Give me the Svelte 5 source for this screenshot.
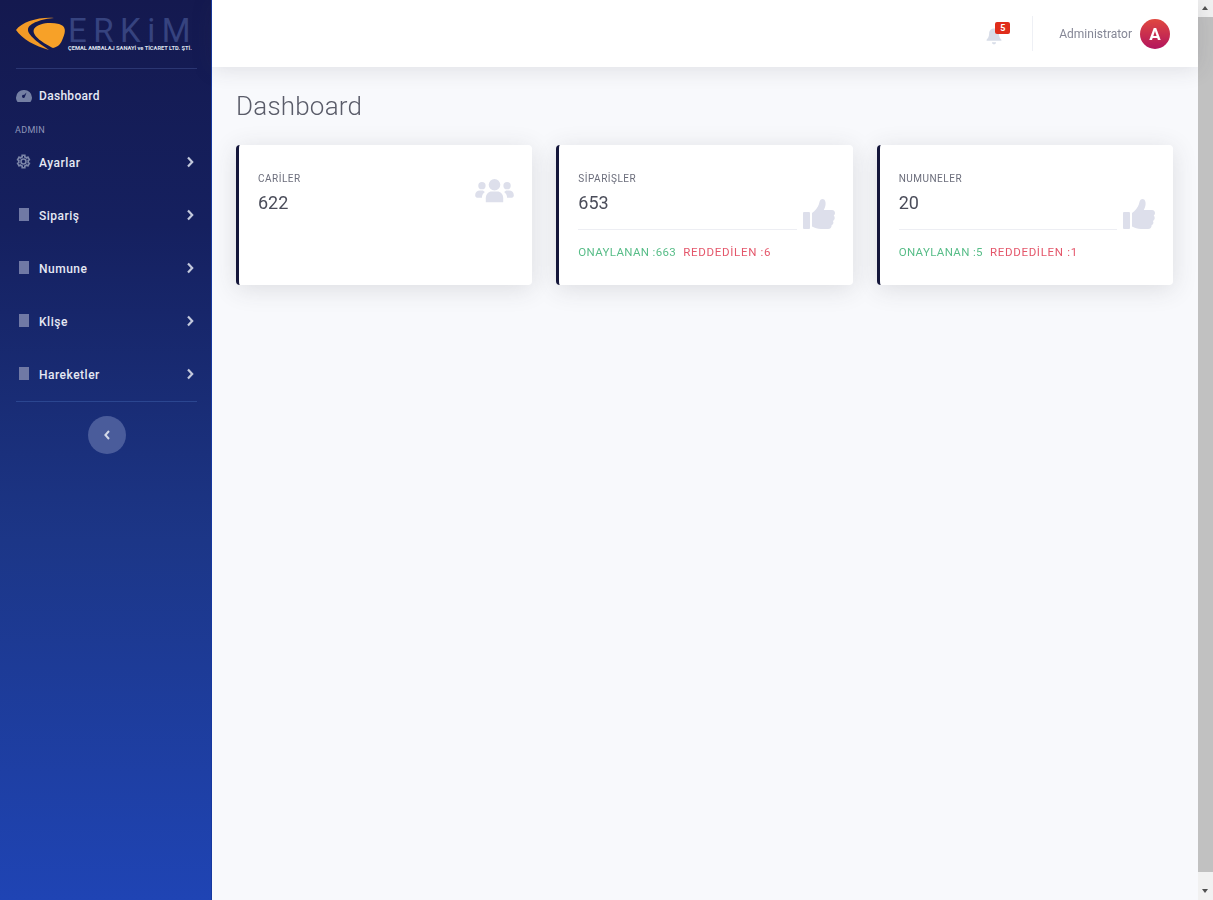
<script>
	const menu = ['Sipariş', 'Numune', 'Klişe', 'Hareketler'];

	const cards = [
		{ title: 'SİPARİŞLER', value: '653', ok: 'ONAYLANAN :663', no: 'REDDEDİLEN :6' },
		{ title: 'NUMUNELER', value: '20', ok: 'ONAYLANAN :5', no: 'REDDEDİLEN :1' }
	];
</script>

<div class="page">
	<aside class="sidebar">
		<div class="brand">
			<svg class="logo-mark" viewBox="0 0 50 34" width="50" height="34">
				<path d="M0 13 C6 5 22 0 38 1 C26 2 13 6 12 12 C11 18 24 27 33 33 C19 29 6 22 0 13Z" fill="#f39a26" />
				<path d="M18 12 C22 6 34 5 43 7 C50 9 50 14 47 21 C45 27 42 30 37 31 C29 27 15 19 18 12Z" fill="#f7a128" />
			</svg>
			<div class="brand-text">
				<span class="brand-name">ERKiM</span>
				<span class="brand-sub">ÇEMAL AMBALAJ SANAYİ ve TİCARET LTD. ŞTİ.</span>
			</div>
		</div>
		<hr class="rule" />
		<a class="dash">
			<svg class="icon" viewBox="0 0 16 14" width="16" height="14">
				<path d="M8 1a7.600 7.600 0 0 0-8 7.400c0 1.700.6 3.200 1.600 4.600h12.800c1-1.400 1.600-2.900 1.600-4.600A7.600 7.600 0 0 0 8 1zm0 5 2.500-2.500-1.500 4a1.500 1.500 0 1 1-1-1.500z" fill="#747fa3" fill-rule="evenodd" />
			</svg>
			<span>Dashboard</span>
		</a>
		<div class="heading">ADMIN</div>
		<a class="item">
			<svg class="icon" viewBox="0 0 24 24" width="15" height="15">
				<path d="M12 8a4 4 0 1 0 0 8 4 4 0 0 0 0-8zm9.400 6.900-2-1.200a7.600 7.600 0 0 0 0-3.400l2-1.200-2.300-4-2.100 1.200a7.600 7.600 0 0 0-2.900-1.700V2H9.900v2.600a7.600 7.600 0 0 0-2.900 1.700L4.900 5.100l-2.300 4 2 1.200a7.600 7.600 0 0 0 0 3.400l-2 1.200 2.300 4 2.100-1.200a7.600 7.600 0 0 0 2.900 1.700V22h4.200v-2.600a7.600 7.600 0 0 0 2.900-1.700l2.100 1.200z" fill="none" stroke="#7c86a8" stroke-width="2.600" />
			</svg>
			<span class="label">Ayarlar</span>
			<svg class="chevron" viewBox="0 0 8 12" width="8" height="12">
				<path d="M2 1.500 6.200 6 2 10.500" fill="none" stroke="#c3c9dc" stroke-width="2.200" />
			</svg>
		</a>
		{#each menu as label}
			<a class="item">
				<span class="doc"></span>
				<span class="label">{label}</span>
				<svg class="chevron" viewBox="0 0 8 12" width="8" height="12">
					<path d="M2 1.500 6.200 6 2 10.500" fill="none" stroke="#c3c9dc" stroke-width="2.200" />
				</svg>
			</a>
		{/each}
		<hr class="rule lower" />
		<button class="toggle" aria-label="Daralt">
			<svg viewBox="0 0 8 12" width="8" height="12">
				<path d="M6 2 2.400 6 6 10" fill="none" stroke="#d4d9e8" stroke-width="2" />
			</svg>
		</button>
	</aside>

	<div class="main">
		<header class="topbar">
			<div class="bell">
				<svg viewBox="0 0 16 17" width="18" height="18">
					<path d="M8 1.500c-2.800 0-4.600 2-4.600 4.700 0 3-1 4.500-2.400 5.800v1h14v-1c-1.400-1.300-2.400-2.800-2.400-5.800C12.600 3.500 10.800 1.500 8 1.500zM6 14.500a2 2 0 0 0 4 0z" fill="#d8dde8" />
				</svg>
				<span class="badge">5</span>
			</div>
			<span class="divider"></span>
			<span class="user">Administrator</span>
			<span class="avatar">A</span>
		</header>
		<main class="content">
			<h1>Dashboard</h1>
			<div class="cards">
				<section class="card">
					<div class="row">
						<div class="body">
							<div class="title">CARİLER</div>
							<div class="value">622</div>
						</div>
						<svg class="card-icon users" viewBox="0 0 40 30" width="39" height="29">
							<circle cx="20" cy="8" r="6" />
							<circle cx="7" cy="9" r="3.800" />
							<circle cx="33" cy="9" r="3.800" />
							<path d="M11 26v-4c0-4.500 3-7 6-7h6c3 0 6 2.500 6 7v4z" />
							<path d="M0 19c0-3 2-5 5-5h3l2 1.500c-2 1.500-3 3.500-3 6H2c-1 0-2-1-2-2.500zM40 19c0-3-2-5-5-5h-3l-2 1.500c2 1.500 3 3.500 3 6h5c1 0 2-1 2-2.500z" />
						</svg>
					</div>
				</section>
				{#each cards as card}
					<section class="card">
						<div class="row">
							<div class="body">
								<div class="title">{card.title}</div>
								<div class="value">{card.value}</div>
								<hr class="line" />
							</div>
							<svg class="card-icon thumb" viewBox="0 0 32 31" width="32" height="31">
								<rect x="0" y="13" width="7" height="17" rx="1" />
								<path d="M9 14c3-2 6-6 7-9 .5-2 1-5 3.500-5C22 0 23 3 22.500 6c-.3 2-1.200 4-1.700 5H29c2 0 3 1.500 3 3 0 1-.5 2-1.300 2.600.6.600 1 1.400 1 2.400 0 1.300-.8 2.400-1.800 2.900.3.500.5 1 .5 1.700 0 1.300-.8 2.200-1.800 2.700.1 2.200-1.200 3.700-3.600 3.700H18c-3.500 0-6-1-9-2.500z" />
							</svg>
						</div>
						<div class="stats">
							<span class="ok">{card.ok}</span>
							<span class="no">{card.no}</span>
						</div>
					</section>
				{/each}
			</div>
		</main>
	</div>

	<div class="scrollbar">
		<span class="arrow up"></span>
		<span class="thumb-bar"></span>
		<span class="arrow down"></span>
	</div>
</div>

<style>
	:global(body) {
		font-family: Roboto, "Liberation Sans", sans-serif;
		background: #f8f9fc;
	}

	.page {
		display: flex;
		height: 900px;
		overflow: hidden;
		color: #3a3b45;
		filter: blur(0.7px);
	}

	.sidebar {
		width: 212px;
		flex: none;
		padding: 14px 14px 0 16px;
		box-sizing: border-box;
		background: linear-gradient(180deg, #14194f 0%, #15205f 25%, #1c3687 60%, #1f44b4 100%);
		border-right: 1px solid #16389f;
		display: flex;
		flex-direction: column;
	}

	.brand {
		display: flex;
		height: 40px;
	}

	.logo-mark {
		flex: none;
		margin-top: 3px;
	}

	.brand-text {
		display: flex;
		flex-direction: column;
		margin-left: 2px;
	}

	.brand-name {
		margin-top: 3px;
		font-size: 33px;
		line-height: 27px;
		letter-spacing: 6.500px;
		color: #36437f;
		font-weight: 400;
		white-space: nowrap;
	}

	.brand-sub {
		font-size: 5.700px;
		line-height: 8px;
		font-weight: 700;
		color: #dfe2ee;
		white-space: nowrap;
	}

	.rule {
		width: 100%;
		margin: 14px 0 0;
		border: 0;
		border-top: 1px solid #2b3672;
	}

	.rule.lower {
		margin-top: 1px;
		border-top-color: #2b4690;
	}

	.dash,
	.item {
		display: flex;
		align-items: center;
		color: #e6e9f4;
		font-size: 12px;
		font-weight: 500;
		letter-spacing: 0.5px;
	}

	.dash {
		height: 53px;
		letter-spacing: 0.3px;
	}

	.dash .icon {
		margin-right: 7px;
	}

	.heading {
		font-size: 9px;
		line-height: 12px;
		letter-spacing: 0.3px;
		color: #8e96b9;
		margin-top: 2px;
		margin-left: -1px;
	}

	.item {
		height: 53px;
	}

	.label {
		margin-top: 2px;
	}

	.heading + .item {
		margin-top: -1px;
	}

	.icon,
	.doc {
		flex: none;
		margin-right: 8px;
	}

	.doc {
		width: 10px;
		height: 13px;
		margin-left: 3px;
		margin-right: 10px;
		background: #7079a5;
	}

	.item .icon {
		margin-left: 0;
	}

	.chevron {
		margin-left: auto;
		margin-right: 3px;
	}

	.toggle {
		width: 38px;
		height: 38px;
		margin: 14px auto 0;
		padding: 0;
		border: 0;
		border-radius: 50%;
		background: #4a5c9b;
		display: flex;
		align-items: center;
		justify-content: center;
	}

	.main {
		flex: 1;
		min-width: 0;
		display: flex;
		flex-direction: column;
	}

	.topbar {
		height: 67px;
		flex: none;
		background: #fff;
		box-shadow: 0 2px 22px rgba(58, 59, 69, 0.14);
		display: flex;
		align-items: center;
		justify-content: flex-end;
		padding-right: 28px;
		position: relative;
	}

	.bell {
		position: relative;
		width: 18px;
		height: 18px;
		margin-top: 4px;
		margin-right: 29px;
	}

	.badge {
		position: absolute;
		top: -5px;
		left: 10px;
		width: 15px;
		height: 12px;
		border-radius: 2px;
		background: #e02d1b;
		color: #fff;
		font-size: 9px;
		line-height: 12px;
		text-align: center;
		font-weight: 700;
	}

	.divider {
		width: 1px;
		height: 35px;
		background: #eef0f5;
		margin-right: 26px;
	}

	.user {
		font-size: 12px;
		color: #858796;
		margin-top: 1px;
		margin-right: 8px;
	}

	.avatar {
		width: 30px;
		height: 30px;
		border-radius: 50%;
		background: linear-gradient(180deg, #e0483f, #b3155e);
		color: #fff;
		font-size: 17px;
		font-weight: 700;
		line-height: 30px;
		text-align: center;
	}

	.content {
		padding: 24px 25px 0 24px;
	}

	h1 {
		margin: 0 0 24px;
		font-size: 26px;
		line-height: 30px;
		letter-spacing: 0.2px;
		font-weight: 300;
		color: #5a5c69;
	}

	.cards {
		display: grid;
		grid-template-columns: repeat(3, 1fr);
		gap: 24px;
	}

	.card {
		height: 140px;
		box-sizing: border-box;
		padding: 27px 18px 0 19px;
		background: #fff;
		border-left: 3px solid #14163a;
		border-radius: 4px;
		box-shadow: 0 4px 24px rgba(58, 59, 69, 0.15);
	}

	.row {
		display: flex;
		gap: 6px;
	}

	.body {
		flex: 1;
		min-width: 0;
	}

	.title {
		font-size: 10px;
		line-height: 13px;
		letter-spacing: 0.5px;
		color: #6b6d7b;
	}

	.value {
		margin-top: 6px;
		font-size: 18px;
		line-height: 24px;
		font-weight: 400;
		color: #4b4d5a;
	}

	.line {
		margin: 14px 0 0;
		border: 0;
		border-top: 1px solid #edeef3;
	}

	.card-icon {
		flex: none;
		fill: #dddfeb;
	}

	.users {
		margin-top: 5px;
	}

	.thumb {
		margin-top: 27px;
	}

	.stats {
		margin-top: 15px;
		font-size: 11.500px;
		line-height: 14px;
		display: flex;
		gap: 7px;
	}

	.ok {
		color: #58bd88;
		letter-spacing: 0.35px;
	}

	.no {
		color: #e4566a;
		letter-spacing: 0.7px;
	}

	.scrollbar {
		width: 15px;
		flex: none;
		background: #f1f1f1;
		display: flex;
		flex-direction: column;
		align-items: center;
	}

	.thumb-bar {
		flex: 1;
		width: 100%;
		margin-bottom: 11px;
		background: #c1c1c1;
	}

	.arrow {
		height: 17px;
		width: 100%;
		position: relative;
	}

	.arrow::after {
		content: '';
		position: absolute;
		left: 4px;
		border-left: 3.500px solid transparent;
		border-right: 3.500px solid transparent;
	}

	.up::after {
		top: 6px;
		border-bottom: 4px solid #505050;
	}

	.down::after {
		top: 6px;
		border-top: 4px solid #505050;
	}
</style>
